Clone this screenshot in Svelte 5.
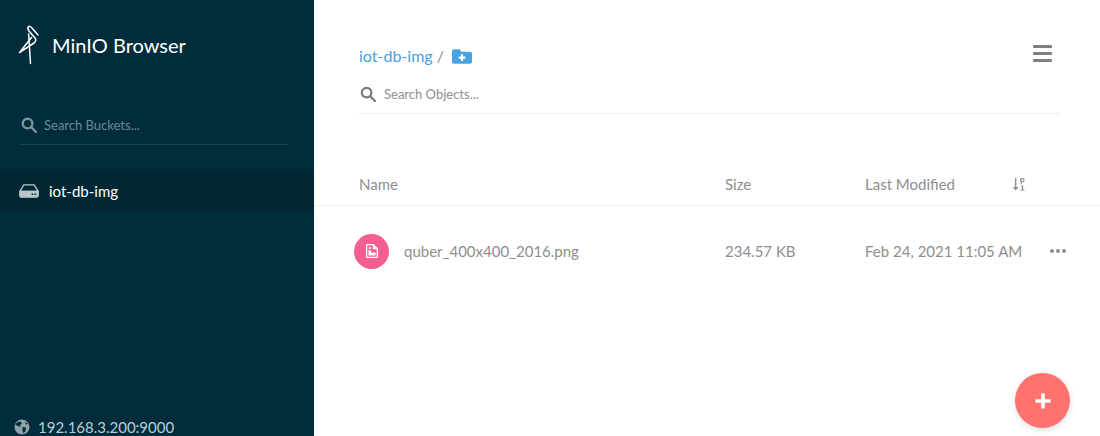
<script lang="ts">
  const file = { name: 'quber_400x400_2016.png', size: '234.57 KB', modified: 'Feb 24, 2021 11:05 AM' };
</script>

<div class="page">
  <aside class="sidebar">
    <header class="brand">
      <svg class="logo" viewBox="0 0 22 40" width="22" height="40" fill="none" stroke="#fff" stroke-width="1.5" stroke-linecap="round" stroke-linejoin="round">
        <path d="M20 10 L13.5 2.5 Q11.5 0.5 10.2 2 Q9.2 3.5 11 6 L17 13 Q19 15.5 16 18 L1.5 27.5 L13.5 12.5" />
        <path d="M10.6 9 L12.5 38.5" />
      </svg>
      <span class="brand-name">MinIO Browser</span>
    </header>

    <div class="bucket-search">
      <svg class="search-icon" viewBox="0 0 16 16" width="16" height="16" fill="none" stroke="#7a949d" stroke-width="2.4">
        <circle cx="6.6" cy="6.6" r="4.8" />
        <path d="M10.2 10.2 L15 15" stroke-linecap="round" />
      </svg>
      <span class="bucket-placeholder">Search Buckets...</span>
    </div>

    <div class="bucket-row">
      <svg viewBox="0 0 20 14" width="20" height="14" fill="none" stroke="#b9c7cb" stroke-width="1.3">
        <path d="M4.8 0.8 H15.2 L19.2 7.4 H0.8 Z" />
        <path d="M0.8 7.4 H19.2 V11.5 Q19.2 13.2 17.5 13.2 H2.5 Q0.8 13.2 0.8 11.5 Z" fill="#b9c7cb" />
        <path d="M12.6 10.3 H14.2 M15.6 10.3 H17.2" stroke="#002733" stroke-width="1.5" />
      </svg>
      <span>iot-db-img</span>
    </div>

    <footer class="host">
      <svg viewBox="0 0 16 16" width="16" height="16">
        <circle cx="8" cy="8" r="7.5" fill="#8fa2a8" />
        <path d="M3 3.5 L6.5 2.5 L8 4.5 L6 6 L6.5 8 L3.5 7 L1.5 5.5 Z M8.5 8 L12 8.5 L11.5 12 L9.5 14.5 L8.5 11.5 Z M11 2.5 L14 5 L12 5.5 Z" fill="#012c3b" />
      </svg>
      <span>192.168.3.200:9000</span>
    </footer>
  </aside>

  <main class="main">
    <div class="top">
      <div class="top-left">
        <div class="crumbs">
          <span class="crumb-link">iot-db-img</span>
          <span class="crumb-sep">/</span>
          <svg class="folder" viewBox="0 0 21 15" width="20" height="15">
            <path d="M0 2 Q0 0 2 0 H8 L10 2.5 H19 Q21 2.5 21 4.5 V13 Q21 15 19 15 H2 Q0 15 0 13 Z" fill="#46a2e2" />
            <path d="M10.5 5.2 V12.2 M7 8.7 H14" stroke="#fff" stroke-width="2.2" />
          </svg>
        </div>
      </div>
      <div class="menu-icon"><i></i><i></i><i></i></div>
    </div>

    <div class="object-search">
      <svg viewBox="0 0 16 16" width="16" height="16" fill="none" stroke="#7a7a7a" stroke-width="2.2">
        <circle cx="6.6" cy="6.6" r="4.8" />
        <path d="M10.2 10.2 L15 15" stroke-linecap="round" />
      </svg>
      <span>Search Objects...</span>
    </div>

    <div class="table-head">
      <span class="col-name">Name</span>
      <span class="col-size">Size</span>
      <span class="col-date">Last Modified</span>
      <svg class="sort" viewBox="0 0 14 14" width="14" height="14" fill="#8e8e8e">
        <path d="M3 1 H4.4 V10 H6.6 L3.7 13.5 L0.8 10 H3 Z" />
        <path d="M10.4 1 A2.3 2.3 0 1 1 10.3 5.6 L9.5 7.2 L8.3 7.2 L9.2 5.4 A2.3 2.3 0 0 1 10.4 1 Z M10.4 2.2 A1.1 1.1 0 1 0 10.4 4.4 A1.1 1.1 0 1 0 10.4 2.2 Z" />
        <path d="M9 8.5 H11.2 V12.5 H12.5 V13.5 H8.5 V12.5 H9.9 V9.6 H9 Z" />
      </svg>
    </div>

    <div class="table-row">
      <span class="file-badge">
        <svg viewBox="0 0 12 14" width="12" height="14">
          <path fill-rule="evenodd" d="M1.2 0 H7.6 L12 4.4 V12.8 Q12 14 10.8 14 H1.2 Q0 14 0 12.8 V1.2 Q0 0 1.2 0 Z M1.3 1.3 V12.7 H10.7 V5.2 H6.8 V1.3 Z" fill="#fff" />
          <path d="M2.4 6.2 H5 V8.4 H9.6 V11.6 H2.4 Z M3 3 H5 V5 H3 Z" fill="#fff" />
        </svg>
      </span>
      <span class="col-name file-name">{file.name}</span>
      <span class="col-size">{file.size}</span>
      <span class="col-date">{file.modified}</span>
      <span class="dots"><i></i><i></i><i></i></span>
    </div>

    <button class="fab" aria-label="Add">
      <svg viewBox="0 0 16 16" width="16" height="16"><path d="M8 0.5 V15.5 M0.5 8 H15.5" stroke="#fff" stroke-width="3.6" /></svg>
    </button>
  </main>
</div>

<style>
  :global(body) {
    margin: 0;
    background: #fff;
  }
  .page {
    display: flex;
    width: 1100px;
    height: 436px;
    overflow: hidden;
    font-family: Lato, "Open Sans", sans-serif;
    font-size: 15px;
    color: #8e8e8e;
  }
  .sidebar {
    position: relative;
    flex: 0 0 314px;
    height: 436px;
    background: #012c3b;
    display: flex;
    flex-direction: column;
    overflow: hidden;
  }
  .brand {
    display: flex;
    align-items: center;
    height: 42px;
    margin-top: 24px;
    padding-left: 18px;
    gap: 12px;
  }
  .brand-name {
    color: #fff;
    font-size: 20px;
    line-height: 24px;
    margin-top: -1px;
  }
  .bucket-search {
    display: flex;
    align-items: center;
    height: 38px;
    margin: 40px 25px 0 19px;
    border-bottom: 1px solid #1a4351;
    gap: 7px;
    padding-left: 2px;
  }
  .bucket-placeholder {
    color: #6d8a94;
    font-size: 13px;
  }
  .bucket-row {
    display: flex;
    align-items: center;
    height: 42px;
    margin-top: 25px;
    padding-left: 19px;
    gap: 10px;
    background: #002733;
    color: #fff;
    font-size: 15px;
  }
  .host {
    position: absolute;
    left: 14px;
    bottom: -1px;
    display: flex;
    align-items: center;
    gap: 8px;
    height: 20px;
    color: #b5d0da;
    font-size: 15px;
  }
  .main {
    position: relative;
    flex: 1;
    display: flex;
    flex-direction: column;
  }
  .top {
    display: flex;
    justify-content: space-between;
    padding: 43px 48px 0 45px;
    height: 25px;
  }
  .crumbs {
    display: flex;
    align-items: center;
    height: 25px;
    gap: 4px;
    font-size: 16px;
  }
  .crumb-link {
    color: #46a2e2;
  }
  .crumb-sep {
    color: #8e8e8e;
  }
  .folder {
    margin-left: 4px;
    margin-top: 1px;
  }
  .menu-icon {
    display: flex;
    flex-direction: column;
    gap: 4px;
    margin-top: 2px;
    width: 19px;
  }
  .menu-icon i {
    display: block;
    height: 3px;
    background: #7f7f7f;
    border-radius: 1px;
  }
  .object-search {
    display: flex;
    align-items: center;
    gap: 8px;
    height: 35px;
    padding: 0 0 2px 1px;
    margin: 8px 40px 0 45px;
    border-bottom: 1px solid #eee;
    font-size: 13px;
    color: #8e8e8e;
  }
  .table-head {
    display: flex;
    align-items: center;
    height: 44px;
    margin-top: 48px;
    padding: 0 0 0 45px;
    box-sizing: border-box;
    border-bottom: 1px solid #eee;
    font-size: 15px;
  }
  .col-name {
    width: 366px;
  }
  .col-size {
    width: 140px;
  }
  .col-date {
    width: 147px;
  }
  .table-row {
    display: flex;
    align-items: center;
    height: 90px;
    padding-left: 40px;
    font-size: 15px;
  }
  .file-badge {
    display: flex;
    align-items: center;
    justify-content: center;
    width: 35px;
    height: 35px;
    border-radius: 50%;
    background: #f45f92;
    margin-right: 15px;
  }
  .file-name {
    width: 321px;
  }
  .table-row .col-date {
    width: 185px;
  }
  .dots {
    display: flex;
    gap: 2px;
  }
  .dots i {
    display: block;
    width: 4px;
    height: 4px;
    border-radius: 50%;
    background: #8e8e8e;
  }
  .fab {
    position: absolute;
    left: 701px;
    top: 373px;
    width: 55px;
    height: 55px;
    padding: 0;
    border: 0;
    border-radius: 50%;
    background: #ff726f;
    box-shadow: 0 2px 7px rgba(0, 0, 0, 0.12);
    display: flex;
    align-items: center;
    justify-content: center;
  }
</style>
